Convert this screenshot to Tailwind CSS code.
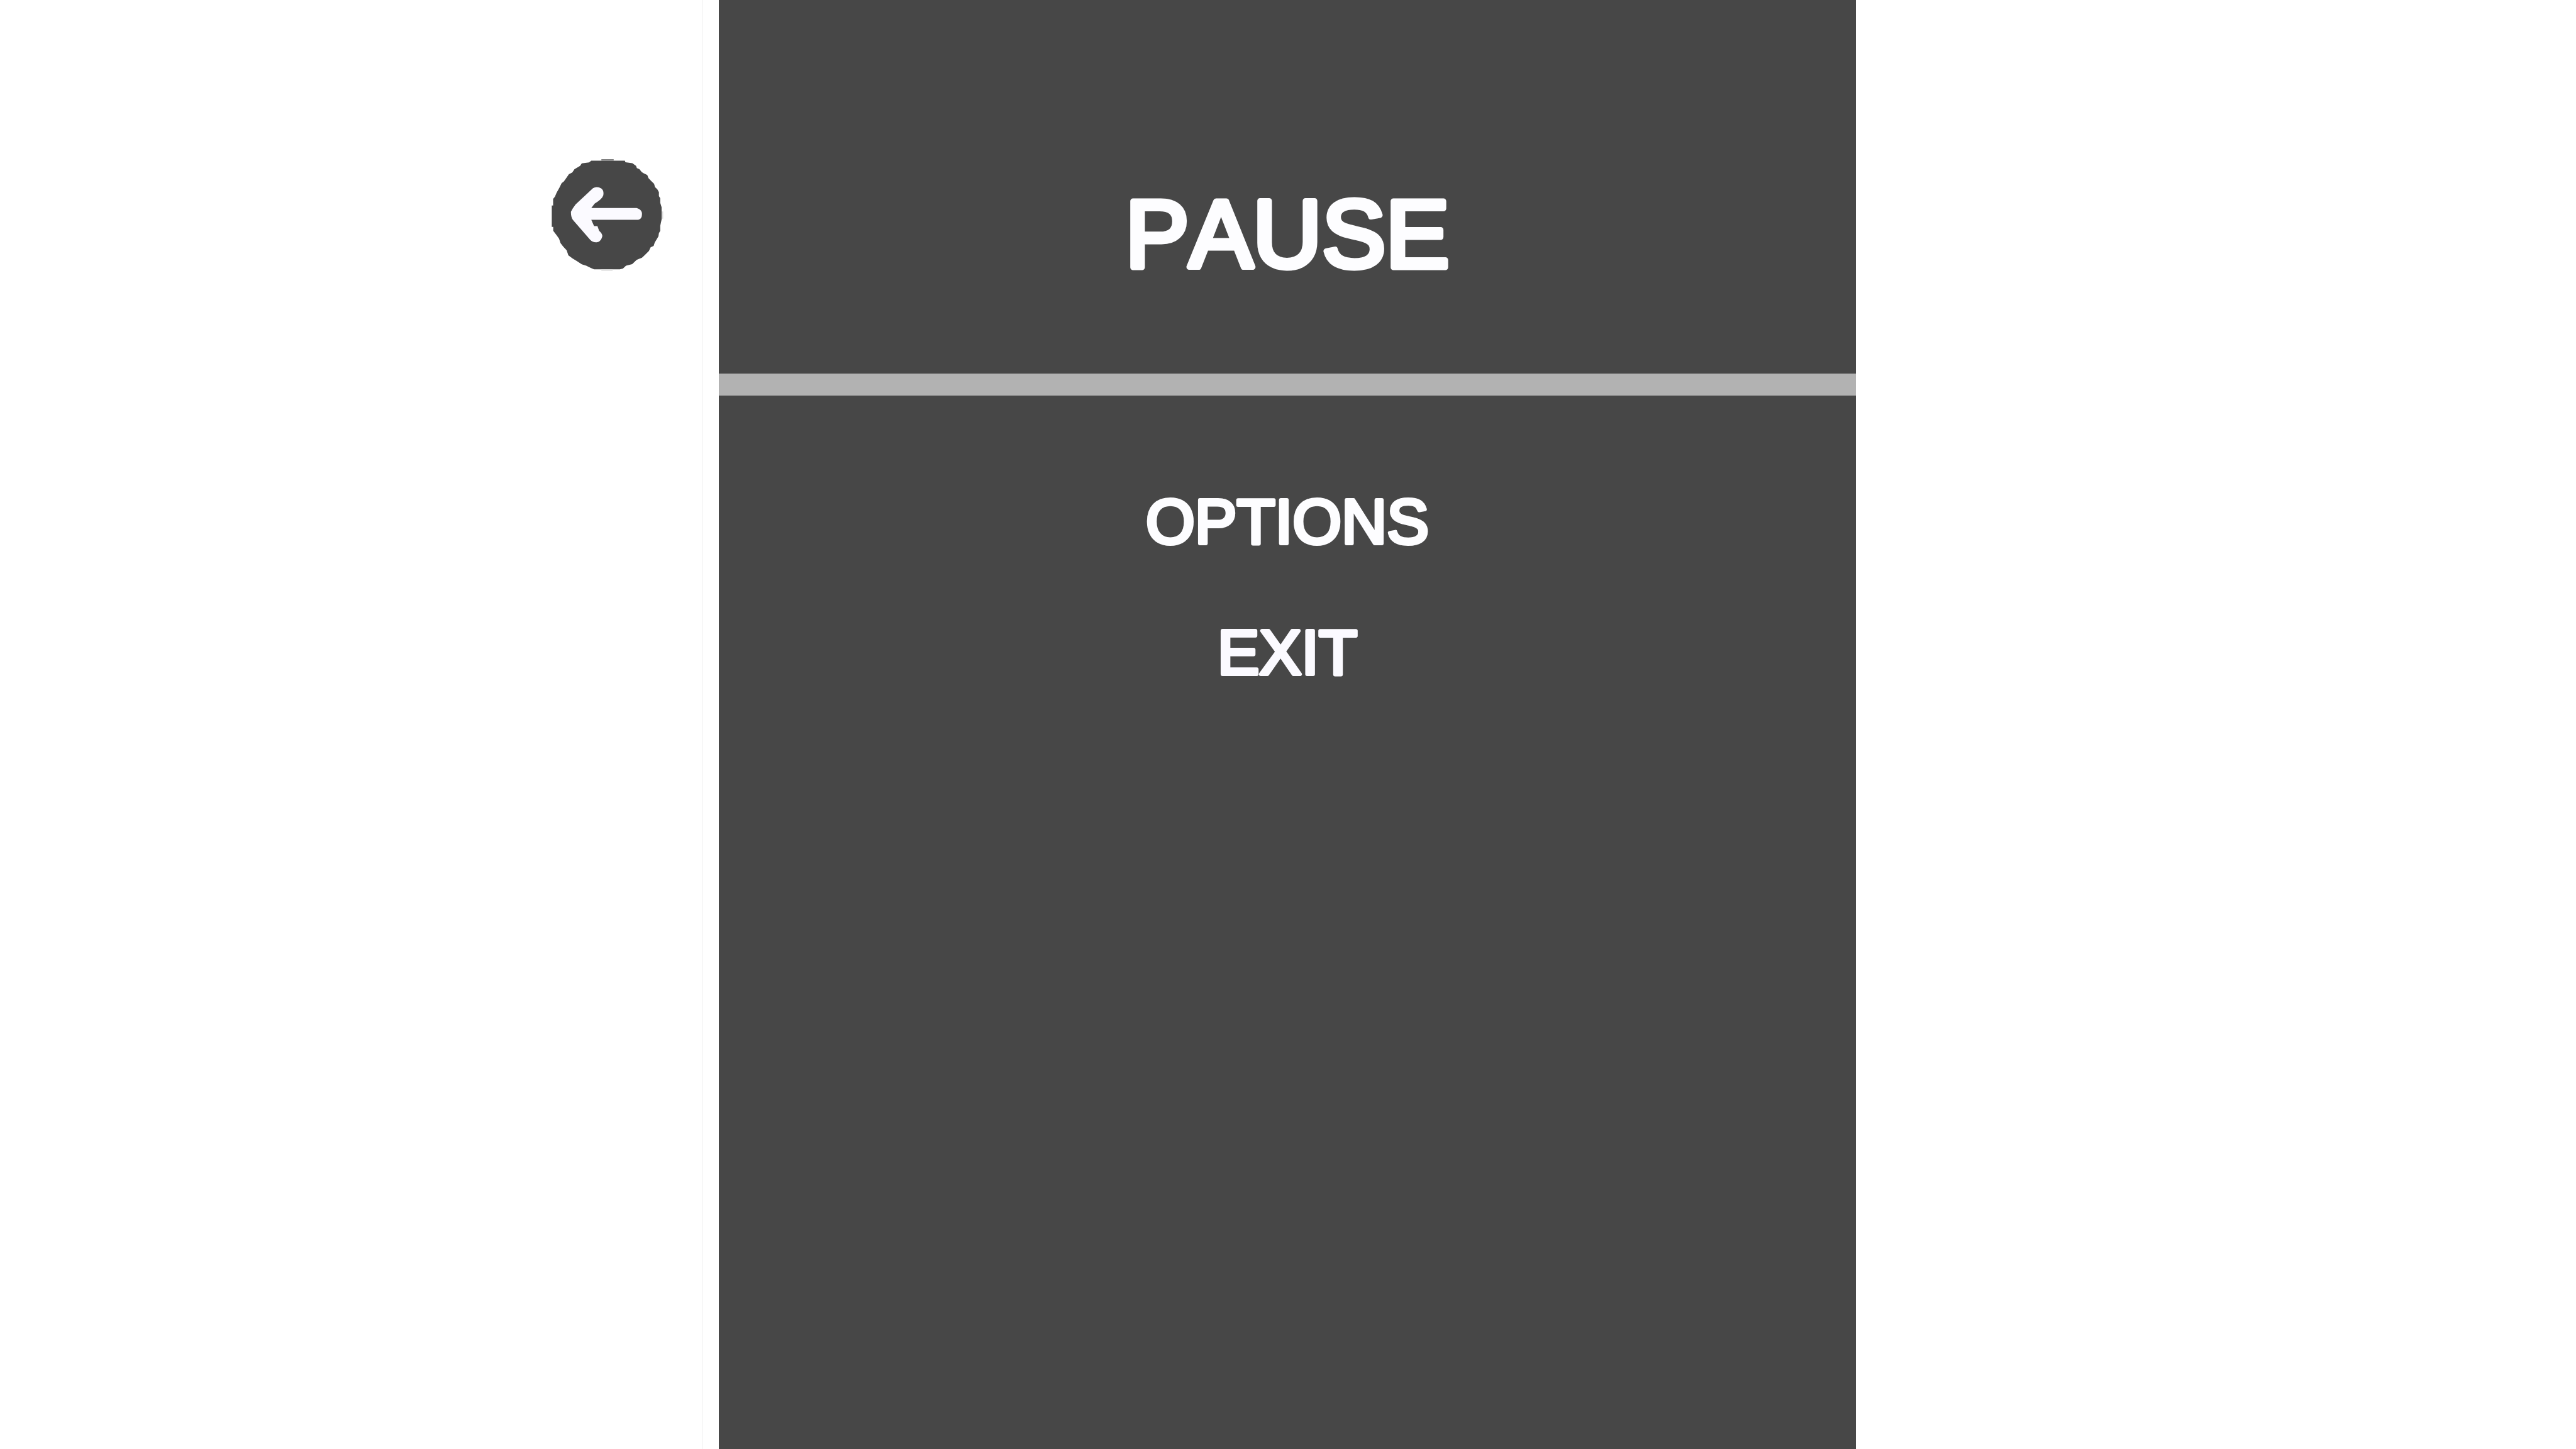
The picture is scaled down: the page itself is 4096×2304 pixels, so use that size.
<!DOCTYPE html>
<html lang="en">
<head>
<meta charset="utf-8">
<title>Pause</title>
<script src="https://cdn.jsdelivr.net/npm/@tailwindcss/browser@4"></script>
</head>
<body class="bg-white font-['Liberation_Sans',Arial,sans-serif]">
<div class="grid min-h-screen grid-cols-[1143fr_1808fr_1145fr]">
  <aside class="flex justify-end">
    <button type="button" aria-label="Back" class="mt-[253px] mr-[62px] size-[178px] cursor-pointer self-start">
      <svg class="size-full" viewBox="130 130 1000 1000" aria-hidden="true">
        <path class="fill-[#474747]" d="M485 144H785L790 158L852 166L885 190L892 210L915 220L935 245L950 255L985 272L996 300L1020 325L1046 350L1054 380L1075 400L1089 425V460L1101 480V520L1113 560V670L1101 725V770L1089 792L1085 820L1070 845L1052 875L1042 905L1015 918L1000 950L965 985L938 1010L890 1030L850 1068L795 1082L768 1107L740 1115H510L480 1102L440 1082L400 1070L355 1040L318 1018L280 990L265 945L235 912L210 880L197 840L175 810L145 770V735H132V545H144V485L160 465L175 430L200 385L220 345L240 330L265 295L285 265L315 250L335 220L385 190L400 168L465 160Z"/>
        <path class="fill-[#808080]" d="M575 130H685V144H575Z"/>
        <path class="fill-[#dcdcdc]" d="M1113 597H1127V662H1113ZM575 1115H675V1127H575Z"/>
        <path class="fill-[#fbfaff]" d="M303 600L320 570L345 535L500 390Q535 370 575 392Q600 410 592 455Q580 490 515 528L485 567H890Q938 580 938 620Q938 665 905 672H485L510 728H540L555 770Q590 800 582 825Q570 865 540 872Q500 878 475 850L320 672Q303 650 303 600Z"/>
      </svg>
    </button>
    <div class="w-[26px] border-l border-[#efefef]"></div>
  </aside>
  <main class="bg-[#474747]">
    <header class="h-[629px] border-b-[35px] border-[#b2b2b2] pt-[275px]">
      <h1>
        <svg class="block h-[200px] w-full">
          <text x="50%" y="150" text-anchor="middle" class="fill-[#fdfdff] stroke-[#fdfdff] stroke-[9px] text-[152px] [font-kerning:none] [stroke-linejoin:round]">PAUSE</text>
        </svg>
      </h1>
    </header>
    <nav class="flex flex-col items-center gap-[88px] pt-[145px]" aria-label="Pause menu">
      <button type="button" class="cursor-pointer">
        <svg class="block h-[120px] w-[520px]">
          <text x="50%" y="90" text-anchor="middle" class="fill-[#fdfdff] stroke-[#fdfdff] stroke-[6px] text-[100px] [font-kerning:none] [stroke-linejoin:round]">OPTIONS</text>
        </svg>
      </button>
      <button type="button" class="cursor-pointer">
        <svg class="block h-[120px] w-[520px]">
          <text x="50%" y="90" text-anchor="middle" class="fill-[#fbfaff] stroke-[#fbfaff] stroke-[6px] text-[100px] [font-kerning:none] [stroke-linejoin:round]">EXIT</text>
        </svg>
      </button>
    </nav>
  </main>
</div>
</body>
</html>
